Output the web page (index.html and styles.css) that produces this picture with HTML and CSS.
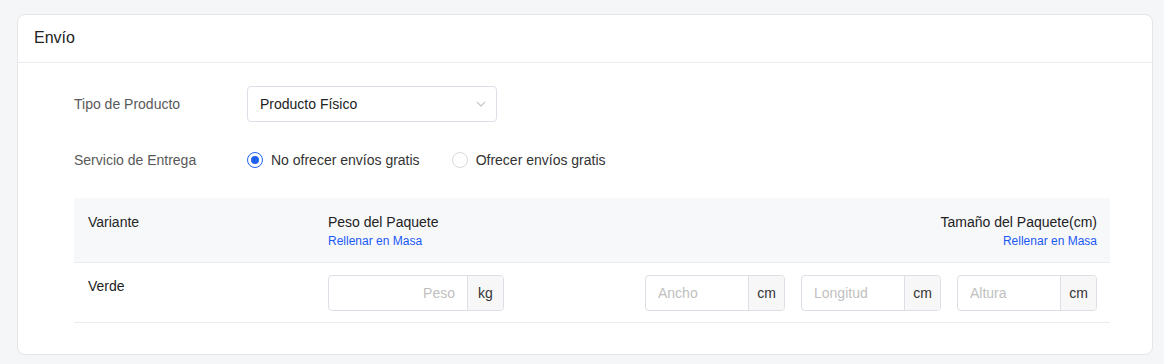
FILE: index.html
```html
<!DOCTYPE html>
<html lang="es">
<head>
<meta charset="utf-8">
<link rel="stylesheet" href="styles.css">
</head>
<body>
<div class="card">
  <div class="card-header">Envío</div>
  <div class="card-body">
    <div class="form-row">
      <div class="form-label">Tipo de Producto</div>
      <div class="select">
        <span>Producto Físico</span>
        <svg class="chev" width="10" height="6" viewBox="0 0 10 6"><path d="M1 1l4 4 4-4" fill="none" stroke="#c0c4cc" stroke-width="1.1"/></svg>
      </div>
    </div>
    <div class="form-row">
      <div class="form-label">Servicio de Entrega</div>
      <div class="radios">
        <label class="radio checked"><span class="dot"></span>No ofrecer envíos gratis</label>
        <label class="radio"><span class="dot"></span>Ofrecer envíos gratis</label>
      </div>
    </div>
    <div class="table">
      <div class="thead">
        <div class="cell c-var">Variante</div>
        <div class="cell c-peso">
          <div class="th-title">Peso del Paquete</div>
          <a class="link">Rellenar en Masa</a>
        </div>
        <div class="cell c-size">
          <div class="th-title">Tamaño del Paquete(cm)</div>
          <a class="link">Rellenar en Masa</a>
        </div>
      </div>
      <div class="trow">
        <div class="cell c-var">Verde</div>
        <div class="cell c-peso">
          <div class="input wide"><span class="ph right">Peso</span><span class="addon">kg</span></div>
        </div>
        <div class="cell c-size">
          <div class="inputs">
            <div class="input"><span class="ph">Ancho</span><span class="addon">cm</span></div>
            <div class="input"><span class="ph">Longitud</span><span class="addon">cm</span></div>
            <div class="input"><span class="ph">Altura</span><span class="addon">cm</span></div>
          </div>
        </div>
      </div>
    </div>
  </div>
</div>
</body>
</html>
```
FILE: styles.css
```css
* { box-sizing: border-box; }
html, body { margin: 0; }
body {
  background: #f5f6f8;
  font-family: "Liberation Sans", Arial, sans-serif;
  font-size: 14px;
  color: #262626;
  padding: 14px 11px 0 17px;
}
.card {
  background: #fff;
  border: 1px solid #e3e5e8;
  border-radius: 8px;
  height: 341px;
}
.card-header {
  height: 48px;
  border-bottom: 1px solid #ebedf0;
  padding-left: 16px;
  font-size: 16px;
  line-height: 46px;
  color: #222;
}
.card-body {
  padding: 23px 42px 0 56px;
}
.form-row {
  display: flex;
  align-items: center;
  height: 36px;
  margin-bottom: 20px;
}
.form-label {
  width: 173px;
  color: #595959;
}
.select {
  width: 250px;
  height: 36px;
  border: 1px solid #dcdfe6;
  border-radius: 4px;
  display: flex;
  align-items: center;
  justify-content: space-between;
  padding: 0 10px 0 12px;
  color: #222;
}
.radios { display: flex; gap: 32px; }
.radio {
  display: flex;
  align-items: center;
  gap: 8px;
  color: #333;
}
.dot {
  width: 16px;
  height: 16px;
  border-radius: 50%;
  border: 1px solid #d9d9d9;
  display: inline-flex;
  align-items: center;
  justify-content: center;
}
.radio.checked .dot { border-color: #2161f2; }
.radio.checked .dot::after {
  content: "";
  width: 8px;
  height: 8px;
  border-radius: 50%;
  background: #2161f2;
}
.table { width: 1036px; }
.thead, .trow {
  display: flex;
  border-bottom: 1px solid #ebedf0;
}
.thead { background: #f7f8fa; height: 65px; }
.trow { height: 60px; }
.cell { padding: 12px 14px 0; line-height: 22px; }
.c-var { width: 240px; }
.c-peso { flex: 1; }
.c-size { text-align: right; padding-right: 13px; }
.thead .cell { padding-top: 13px; }
.th-title { line-height: 22px; color: #222; }
.link {
  display: block;
  font-size: 12px;
  line-height: 16px;
  color: #1b59f5;
}
.trow .c-var { line-height: 22px; padding-top: 12px; color: #222; }
.input {
  width: 140px;
  height: 36px;
  border: 1px solid #dcdfe6;
  border-radius: 4px;
  display: flex;
  overflow: hidden;
}
.input.wide { width: 176px; }
.ph {
  flex: 1;
  color: #bfbfbf;
  line-height: 34px;
  padding: 0 12px;
  text-align: left;
}
.ph.right { text-align: right; }
.addon {
  width: 36px;
  border-left: 1px solid #dcdfe6;
  background: #f7f7f8;
  text-align: center;
  line-height: 34px;
  color: #333;
}
.inputs { display: flex; gap: 16px; }
```
